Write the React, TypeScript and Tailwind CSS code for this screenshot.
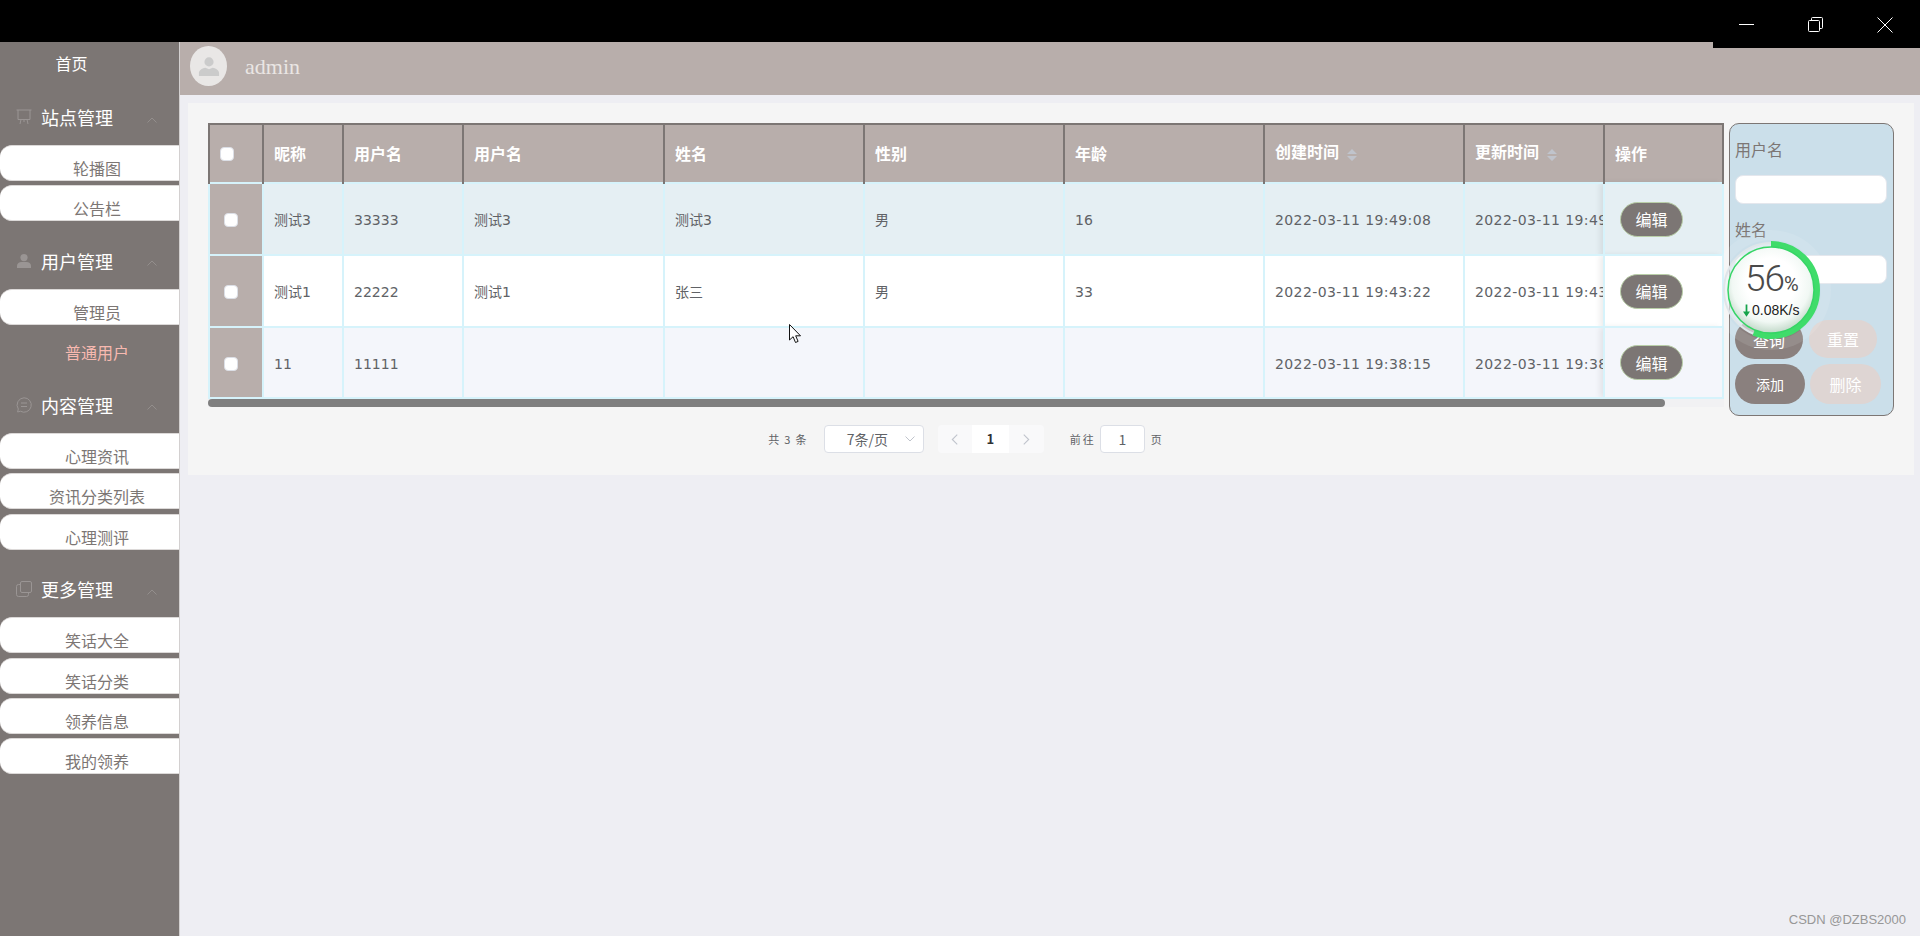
import React from 'react';

const cjk = 'font-["Noto_Sans_CJK_SC","Liberation_Sans",sans-serif]';

const groups = [
    { title: '站点管理', icon: 'board', items: ['轮播图', '公告栏'] },
    { title: '用户管理', icon: 'user', items: ['管理员', '普通用户'] },
    { title: '内容管理', icon: 'chat', items: ['心理资讯', '资讯分类列表', '心理测评'] },
    { title: '更多管理', icon: 'copy', items: ['笑话大全', '笑话分类', '领养信息', '我的领养'] },
];

const columns = [
    { label: '昵称', width: 'w-[80px]' },
    { label: '用户名', width: 'w-[120px]' },
    { label: '用户名', width: 'w-[201px]' },
    { label: '姓名', width: 'w-[200px]' },
    { label: '性别', width: 'w-[200px]' },
    { label: '年龄', width: 'w-[200px]' },
    { label: '创建时间', width: 'w-[200px]', sortable: true },
    { label: '更新时间', width: 'w-[140px]', sortable: true },
];

const rows = [
    { bg: 'bg-[#e5eff3]', h: 'h-[72px]', cells: ['测试3', '33333', '测试3', '测试3', '男', '16', '2022-03-11 19:49:08', '2022-03-11 19:49:08'] },
    { bg: 'bg-white', h: 'h-[72px]', cells: ['测试1', '22222', '测试1', '张三', '男', '33', '2022-03-11 19:43:22', '2022-03-11 19:43:22'] },
    { bg: 'bg-[#f4f6fb]', h: 'h-[71px]', cells: ['11', '11111', '', '', '', '', '2022-03-11 19:38:15', '2022-03-11 19:38:15'] },
];

const SideIcon = ({ name }: { name: string }) => {
    if (name === 'user') {
        return (
            <svg viewBox="0 0 16 16" className="w-4 h-4 text-[#9a9594]" fill="currentColor">
                <circle cx="8" cy="4.6" r="3.6" />
                <path d="M1 15v-2.2C1 10.4 3.2 9 5.4 9h5.2c2.2 0 4.4 1.4 4.4 3.8V15z" />
            </svg>
        );
    }
    if (name === 'chat') {
        return (
            <svg viewBox="0 0 16 16" className="w-4 h-4 text-[#9a9594]" fill="none" stroke="currentColor">
                <path d="M8 .8a7.2 7.2 0 1 1-3.6 13.4L1.6 15l.7-3A7.2 7.2 0 0 1 8 .8z" />
                <path d="M5 6h6M5 9.5h6" />
            </svg>
        );
    }
    if (name === 'copy') {
        return (
            <svg viewBox="0 0 16 16" className="w-4 h-4 text-[#9a9594]" fill="none" stroke="currentColor">
                <rect x="4.5" y=".5" width="11" height="11" rx="1.5" />
                <path d="M4.5 3.5h-2a2 2 0 0 0-2 2v8a2 2 0 0 0 2 2h8a2 2 0 0 0 2-2v-2" />
            </svg>
        );
    }
    return (
        <svg viewBox="0 0 16 16" className="w-4 h-4 text-[#9a9594]" fill="none" stroke="currentColor">
            <path d="M.5 1h15M2 1v9.5h12V1M5 10.5 4 15M11 10.5l1 4.5M8 10.5V13" />
        </svg>
    );
};

const Sidebar = () => (
    <aside className={`w-[180px] shrink-0 bg-[#7c7674] border-r border-[#d3d0d0] ${cjk}`}>
        <div className="w-[143px] h-[42px] text-center text-white text-base leading-[42px]">首页</div>
        {groups.map((group) => (
            <div key={group.title} className="mb-[6.67px]">
                <div className="h-[61px] pt-[5px] pl-4 flex items-center text-white text-lg">
                    <SideIcon name={group.icon} />
                    <span className="ml-[9px]">{group.title}</span>
                    <svg viewBox="0 0 10 6" className="ml-[34px] mt-[5px] w-[10px] h-[6px] text-[#938e8c]" fill="none" stroke="currentColor">
                        <path d="M.5 5.5 5 1l4.5 4.5" />
                    </svg>
                </div>
                {group.items.map((item) =>
                    item === '普通用户' ? (
                        <div key={item} className="h-[36px] mb-[4.33px] pl-[15px] pt-[11px] text-center text-base leading-6 text-[#f7b9b0]">{item}</div>
                    ) : (
                        <div key={item} className="h-[36px] mb-[4.33px] pl-[15px] pt-[10px] text-center text-base leading-6 text-[#7c7674] bg-white rounded-l-xl border-t border-b border-[#dcd9d8]">{item}</div>
                    ),
                )}
            </div>
        ))}
    </aside>
);

const SortCaret = () => (
    <svg viewBox="0 0 10 12" className="inline-block w-[10px] h-3 ml-2 text-[#c0c4cc]" fill="currentColor">
        <path d="M5 0l5 5H0zM5 12 0 7h10z" />
    </svg>
);

const Checkbox = () => <span className="block w-[14px] h-[14px] rounded-sm bg-white border border-[#dcdfe6]" />;

const DataTable = () => (
    <div className="w-[1516px]">
        <table className="w-[1514px] table-fixed border-collapse font-['DejaVu_Sans','Noto_Sans_CJK_SC',sans-serif] text-sm text-[#606266]">
            <thead>
                <tr className={`h-[59px] bg-[#b8aeab] text-white text-base font-bold text-left ${cjk}`}>
                    <th className="w-[54px] pl-[10px] border-2 border-b-0 border-[#7c7674]"><Checkbox /></th>
                    {columns.map((col, i) => (
                        <th key={i} className={`${col.width} px-[10px] pb-[2px] border-2 border-b-0 border-[#7c7674]`}>
                            <span className={col.sortable ? 'relative -top-[2px]' : ''}>{col.label}</span>
                            {col.sortable && <SortCaret />}
                        </th>
                    ))}
                    <th className="w-[119px] px-[10px] pb-[2px] border-2 border-b-0 border-[#7c7674]">操作</th>
                </tr>
            </thead>
            <tbody>
                {rows.map((row, r) => (
                    <tr key={r} className={`${row.h} ${row.bg}`}>
                        <td className="bg-[#b8aeab] pl-[14px] pt-[2px] border-2 border-[#d6f3fb]"><Checkbox /></td>
                        {row.cells.map((cell, c) => (
                            <td key={c} className={`px-[10px] pt-[2px] border-2 border-[#d6f3fb] whitespace-nowrap overflow-hidden [text-overflow:clip] ${c >= 6 ? 'tracking-[0.4px]' : ''}`}>{cell}</td>
                        ))}
                        <td className="pl-[15px] border-2 border-[#d6f3fb] shadow-[-4px_0_6px_rgba(0,0,0,0.08)]">
                            <button className={`w-[63px] h-[35px] rounded-full bg-[#7c7674] border border-[#b9cfa8] text-white text-base ${cjk}`}>编辑</button>
                        </td>
                    </tr>
                ))}
            </tbody>
        </table>
        <div className="h-2 bg-[#f1f1f3]">
            <div className="w-[1457px] h-2 rounded-full bg-[#7f7f7f]" />
        </div>
    </div>
);

const Pagination = () => (
    <div className={`mt-[18px] w-[1516px] pr-[2px] flex justify-center items-center text-[11px] text-[#606266] ${cjk}`}>
        <span className="tracking-[1.3px]">共 3 条</span>
        <div className="ml-4 w-[100px] h-[28px] pl-[22px] pr-2 flex items-center justify-between bg-white border border-[#dcdfe6] rounded text-sm">
            7条/页
            <svg viewBox="0 0 10 6" className="w-[10px] h-[6px] text-[#c0c4cc]" fill="none" stroke="currentColor">
                <path d="M.5.5 5 5 9.5.5" />
            </svg>
        </div>
        <div className="ml-[14px] w-[34px] h-[28px] flex items-center justify-center bg-[#f9f9fa] rounded-l">
            <svg viewBox="0 0 6 10" className="w-[7px] h-[11px] text-[#c0c4cc]" fill="none" stroke="currentColor">
                <path d="M5.5.5 1 5l4.5 4.5" />
            </svg>
        </div>
        <div className="w-[37px] h-[28px] flex items-center justify-center bg-white text-[13px] font-bold text-[#303133]">1</div>
        <div className="w-[35px] h-[28px] flex items-center justify-center bg-[#f9f9fa] rounded-r">
            <svg viewBox="0 0 6 10" className="w-[7px] h-[11px] text-[#c0c4cc]" fill="none" stroke="currentColor">
                <path d="M.5.5 5 5 .5 9.5" />
            </svg>
        </div>
        <span className="ml-[26px] tracking-[2px]">前往</span>
        <div className="ml-[4px] w-[45px] h-[28px] flex items-center justify-center bg-white border border-[#dcdfe6] rounded text-sm">1</div>
        <span className="ml-[6px]">页</span>
    </div>
);

const FilterPanel = () => (
    <div className={`ml-[5px] w-[165px] h-[293px] px-[5px] pt-[13px] bg-[#cbdfea] border border-[#7c7674] rounded-[10px] text-base text-[#7c7674] ${cjk}`}>
        <div className="leading-6">用户名</div>
        <div className="mt-[14px] w-[152px] h-[29px] bg-white border border-[#e4e7ed] rounded-lg" />
        <div className="mt-[13px] leading-6">姓名</div>
        <div className="mt-[14px] w-[152px] h-[29px] bg-white border border-[#e4e7ed] rounded-lg" />
        <div className="mt-[36px] flex gap-[6px] text-white">
            <button className="w-[68px] h-[39px] rounded-full bg-[#8a807e]">查询</button>
            <button className="w-[68px] h-[38px] rounded-full bg-[#ded5d3]">重置</button>
        </div>
        <div className="mt-[5px] flex gap-[5px] text-white">
            <button className="w-[70px] h-[40px] rounded-full bg-[#8a807e] text-sm">添加</button>
            <button className="w-[71px] h-[40px] rounded-full bg-[#ded5d3]">删除</button>
        </div>
    </div>
);

// floating network speed ball from the desktop, sits over the filter panel
const SpeedBall = () => (
    <div className="absolute left-[1721px] top-[240px] w-[100px] h-[100px] rounded-full shadow-[0_0_0_10px_rgba(255,255,255,0.1)]">
        <svg viewBox="0 0 100 100" className="absolute inset-0 w-[100px] h-[100px]">
            <defs>
                <radialGradient id="ball" cx="50%" cy="42%" r="58%">
                    <stop offset="0.5" stopColor="#ffffff" />
                    <stop offset="0.78" stopColor="#f1f8f4" />
                    <stop offset="1" stopColor="#c2d9c9" />
                </radialGradient>
            </defs>
            <circle cx="50" cy="50" r="47" fill="#eef3f6" fillOpacity="0.6" stroke="#dfe6ea" strokeWidth="2" />
            <circle cx="50" cy="50" r="46" fill="none" stroke="#3fdc6a" strokeWidth="6" strokeDasharray="162 289" transform="rotate(-90 50 50)" />
            <circle cx="50" cy="50" r="43" fill="url(#ball)" stroke="#35d565" strokeWidth="1.5" />
        </svg>
        <div className="relative pt-[20px] pl-[24px] leading-none text-[#4a4a4a] font-['Roboto',sans-serif] font-light">
            <span className="text-[37px] tracking-[-1px]">56</span>
            <span className="text-[20px] font-normal">%</span>
        </div>
        <div className="relative mt-[6px] pl-[22px] flex items-center text-[14px] leading-none text-[#222] font-['Liberation_Sans',sans-serif]">
            <svg viewBox="0 0 8 14" className="w-[7px] h-[13px] mr-[2px] text-[#16a34a]" fill="currentColor">
                <path d="M3 0h2v8h3l-4 6-4-6h3z" />
            </svg>
            0.08K/s
        </div>
    </div>
);

const WindowBar = () => (
    <div className="h-[42px] bg-black flex justify-end">
        <div className="relative z-10 w-[207px] h-[48px] bg-black text-white flex items-start">
            <svg viewBox="0 0 16 16" className="ml-[26px] mt-[17px] w-4 h-4" fill="none" stroke="currentColor">
                <path d="M0 7.5h15" />
            </svg>
            <svg viewBox="0 0 16 16" className="ml-[53px] mt-[17px] w-4 h-4" fill="none" stroke="currentColor">
                <rect x=".5" y="3.5" width="11" height="11" rx="1" />
                <path d="M3.5 3.5V1.5a1 1 0 0 1 1-1h9a1 1 0 0 1 1 1v9a1 1 0 0 1-1 1h-2" />
            </svg>
            <svg viewBox="0 0 16 16" className="ml-[53px] mt-[17px] w-4 h-4" fill="none" stroke="currentColor">
                <path d="M.5.5l15 15M15.5.5l-15 15" />
            </svg>
        </div>
    </div>
);

export default function App() {
    return (
        <div className="relative w-[1920px] h-[936px] overflow-hidden flex flex-col bg-[#eeeef3]">
            <WindowBar />
            <div className="flex-1 flex min-h-0">
                <Sidebar />
                <div className="flex-1 min-w-0">
                    <header className="h-[53px] bg-[#b8aeab] flex items-center pl-[10px] pb-[5px]">
                        <div className="w-[37px] h-[40px] rounded-[50%] bg-[#e9e7e6] flex items-center justify-center">
                            <svg viewBox="0 0 24 24" className="w-[22px] h-[22px] text-[#cbcbcb]" fill="currentColor">
                                <circle cx="12" cy="7.5" r="5" />
                                <path d="M1 23v-3c0-3 3-5.5 7-6l4 1.5 4-1.5c4 .5 7 3 7 6v3z" />
                            </svg>
                        </div>
                        <span className="ml-[18px] text-[22px] text-[#eae6e4] font-['Liberation_Serif',serif]">admin</span>
                    </header>
                    <main className="mt-2 ml-2 w-[1726px] h-[372px] bg-[#f5f5f5] pl-5 pt-5 flex items-start">
                        <div>
                            <DataTable />
                            <Pagination />
                        </div>
                        <FilterPanel />
                    </main>
                </div>
            </div>
            <SpeedBall />
            <svg viewBox="0 0 12 20" className="absolute left-[789px] top-[324px] w-[12px] h-[20px]" fill="#ffffff" stroke="#111111">
                <path d="M.5.5v15.5l3.6-3.3 2.4 5.8 2.6-1.1-2.4-5.6h4.8z" />
            </svg>
            <span className="absolute right-[14px] bottom-[7px] text-[13px] text-[#979797] font-['Liberation_Sans',sans-serif]">CSDN @DZBS2000</span>
        </div>
    );
}
